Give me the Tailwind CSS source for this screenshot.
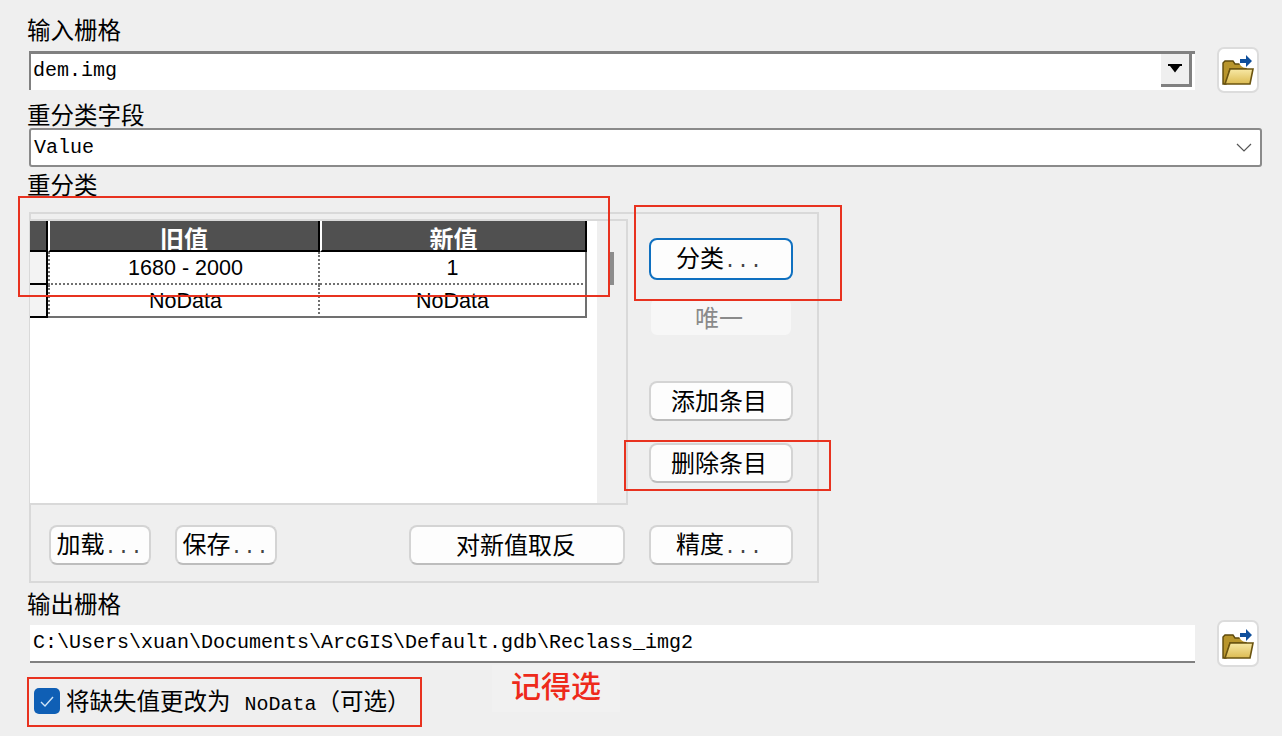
<!DOCTYPE html>
<html lang="zh-CN">
<head>
  <meta charset="UTF-8" />
  <title>重分类</title>
  <script src="https://cdn.jsdelivr.net/npm/@tailwindcss/browser@4"></script>
</head>
<body class="bg-[#efefef] text-black font-['Noto_Sans_CJK_SC','Liberation_Sans',sans-serif] text-[23.5px] leading-[24px]">
<div class="relative w-[1282px] h-[736px] overflow-hidden pl-[29px] pt-[19px]">

  <!-- 输入栅格 -->
  <div class="-ml-[2px] h-[24px] leading-[20px]">输入栅格</div>
  <div class="mt-[4px] flex items-center h-[46px]">
    <div class="w-[1166px] h-[39px] flex items-center justify-between bg-white border-t-[3px] border-l-[2px] border-[#808080] pl-[2px] pr-[3px] font-['Liberation_Mono',monospace] text-[20px]">
      <span class="-mt-[2px]">dem.img</span>
      <div class="w-[31px] h-[33px] -mt-[3px] flex items-center justify-center bg-[#efefef] border-r-[3px] border-b-[3px] border-[#808080]">
        <svg width="14" height="9" viewBox="0 0 14 9"><path d="M0 0h14v2H0z M2 2h10L7 8.5z" fill="#000"/></svg>
      </div>
    </div>
    <button class="ml-[22px] w-[42px] h-[46px] flex items-center justify-center bg-white border-2 border-[#dcdcdc] rounded-[7px]">
      <svg width="32" height="32" viewBox="0 0 32 32">
        <defs>
          <linearGradient id="folderFront" x1="0" y1="0" x2="0" y2="1">
            <stop offset="0" stop-color="#f8e9a6"/>
            <stop offset="1" stop-color="#dcbb52"/>
          </linearGradient>
        </defs>
        <path d="M1 9l2-2h8l2 3h11v5H8L4 30H1z" fill="#b8952c" stroke="#5e4a0c" stroke-width="1.4"/>
        <path d="M8 15h23l-3 15H3z" fill="url(#folderFront)" stroke="#6b5410" stroke-width="1.6"/>
        <circle cx="24" cy="7" r="7" fill="#fff"/>
        <path d="M18 5h6V1l6 6-6 6V9h-6z" fill="#0f4f9c"/>
      </svg>
    </button>
  </div>

  <!-- 重分类字段 -->
  <div class="-ml-[2px] mt-[11px] h-[24px] leading-[20px]">重分类字段</div>
  <div class="w-[1233px] h-[39px] flex items-center justify-between bg-white border-2 border-[#8a8a8a] rounded-[3px] pl-[3px] pr-[8px] font-['Liberation_Mono',monospace] text-[20px]">
    <span>Value</span>
    <svg width="16" height="9" viewBox="0 0 16 9" fill="none" stroke="#555" stroke-width="1.2"><path d="M1 1l7 7 7-7"/></svg>
  </div>

  <!-- 重分类 -->
  <div class="-ml-[2px] mt-[7px] h-[24px] leading-[20px]">重分类</div>
  <div class="mt-[14px] w-[790px] h-[371px] flex border-2 border-[#d9d9d9]">
    <div class="w-[598px] -ml-px">
      <div class="mt-[5px] h-[286px] flex border-y-2 border-r-2 border-[#d9d9d9]">
        <div class="w-[567px] bg-white">
          <div class="w-[557px] grid grid-cols-[18px_272px_267px] text-[21.5px] leading-[33px] font-['Liberation_Sans','Noto_Sans_CJK_SC',sans-serif] text-center">
            <!-- header -->
            <div class="h-[31px] bg-[#505050] border-b-2 border-r-2 border-black"></div>
            <div class="h-[31px] bg-[#505050] border-b-2 border-black border-l-2 border-l-white border-r-2 border-r-black overflow-hidden text-white font-bold text-[24px] leading-[34px] font-['Noto_Sans_CJK_SC',sans-serif]">旧值</div>
            <div class="h-[31px] bg-[#505050] border-b-2 border-black border-l-2 border-l-white border-r-2 border-r-black overflow-hidden text-white font-bold text-[24px] leading-[34px] font-['Noto_Sans_CJK_SC',sans-serif]">新值</div>
            <!-- rows -->
            <div class="h-[33px] bg-[#f3f3f3] border-b-2 border-r-2 border-black"></div>
            <div class="h-[33px] pl-[3px] border-2 border-t-0 border-dotted border-[#707070]">1680 - 2000</div>
            <div class="h-[33px] border-b-2 border-dotted border-[#707070] border-r-2 [border-right-style:solid]">1</div>
            <div class="h-[33px] bg-[#f3f3f3] border-b-2 border-r-2 border-black"></div>
            <div class="h-[33px] pl-[3px] border-2 border-t-0 border-dotted border-[#707070] [border-bottom-style:solid]">NoData</div>
            <div class="h-[33px] border-b-2 border-r-2 border-[#707070]">NoData</div>
          </div>
        </div>
        <div class="pl-[13px] pt-[31px]">
          <div class="w-[4px] h-[33px] bg-[#8c8c8c]"></div>
        </div>
      </div>
      <div class="mt-[20px] pl-[19px] flex text-[24px]">
        <button class="w-[102px] h-[40px] bg-[#fdfdfd] border-2 border-[#d4d4d4] border-b-[#bdbdbd] rounded-[8px]">加载<span class="font-['Liberation_Mono',monospace] text-[20px] tracking-[1px] text-[#444]">...</span></button>
        <button class="ml-[24px] w-[102px] h-[40px] bg-[#fdfdfd] border-2 border-[#d4d4d4] border-b-[#bdbdbd] rounded-[8px]">保存<span class="font-['Liberation_Mono',monospace] text-[20px] tracking-[1px] text-[#444]">...</span></button>
        <button class="ml-[132px] w-[216px] h-[40px] pr-[2px] pb-[3px] bg-[#fdfdfd] border-2 border-[#d4d4d4] border-b-[#bdbdbd] rounded-[8px]">对新值取反</button>
      </div>
    </div>
    <div class="ml-[21px] w-[144px] flex flex-col text-[24px]">
      <button class="mt-[24px] h-[42px] pr-[3px] bg-[#fdfdfd] border-2 border-[#0f70c0] rounded-[8px]">分类<span class="font-['Liberation_Mono',monospace] text-[20px] tracking-[1px] text-[#444]">...</span></button>
      <button class="mt-[17px] h-[40px] pr-[4px] bg-[#f7f7f7] border-2 border-[#efefef] rounded-[8px] text-[#8a8a8a]">唯一</button>
      <button class="mt-[44px] h-[40px] pr-[4px] pb-[3px] bg-[#fdfdfd] border-2 border-[#d4d4d4] border-b-[#bdbdbd] rounded-[8px]">添加条目</button>
      <button class="mt-[22px] h-[40px] pr-[4px] pb-[3px] bg-[#fdfdfd] border-2 border-[#d4d4d4] border-b-[#bdbdbd] rounded-[8px]">删除条目</button>
      <button class="mt-[42px] h-[40px] pr-[3px] bg-[#fdfdfd] border-2 border-[#d4d4d4] border-b-[#bdbdbd] rounded-[8px]">精度<span class="font-['Liberation_Mono',monospace] text-[20px] tracking-[1px] text-[#444]">...</span></button>
    </div>
  </div>

  <!-- 输出栅格 -->
  <div class="-ml-[2px] mt-[10px] h-[24px] leading-[20px]">输出栅格</div>
  <div class="mt-[3px] flex items-center h-[47px]">
    <div class="ml-px w-[1165px] h-[38px] flex items-center bg-white border-b-2 border-[#808080] pl-[3px] pt-[1px] font-['Liberation_Mono',monospace] text-[20px]">C:\Users\xuan\Documents\ArcGIS\Default.gdb\Reclass_img2</div>
    <button class="ml-[22px] w-[42px] h-[47px] flex items-center justify-center bg-white border-2 border-[#dcdcdc] rounded-[7px]">
      <svg width="32" height="32" viewBox="0 0 32 32">
        <path d="M1 9l2-2h8l2 3h11v5H8L4 30H1z" fill="#b8952c" stroke="#5e4a0c" stroke-width="1.4"/>
        <path d="M8 15h23l-3 15H3z" fill="url(#folderFront)" stroke="#6b5410" stroke-width="1.6"/>
        <circle cx="24" cy="7" r="7" fill="#fff"/>
        <path d="M18 5h6V1l6 6-6 6V9h-6z" fill="#0f4f9c"/>
      </svg>
    </button>
  </div>

  <!-- 复选框 -->
  <div class="mt-[21px] ml-[5px] flex items-center h-[26px]">
    <div class="w-[26px] h-[26px] rounded-[5px] bg-[#0f5fb5] flex items-center justify-center">
      <svg width="14" height="11" viewBox="0 0 14 11" fill="none" stroke="#cfe4f7" stroke-width="1.4"><path d="M1 6l4 4 8-9"/></svg>
    </div>
    <span class="ml-[6px] pt-[2px]">将缺失值更改为<span class="ml-[14px] font-['Liberation_Mono',monospace] text-[20px]">NoData</span>（可选）</span>
  </div>

  <!-- 红色标注 -->
  <div class="absolute left-[18px] top-[196px] w-[592px] h-[101px] border-2 border-[#e8321f]"></div>
  <div class="absolute left-[634px] top-[205px] w-[208px] h-[96px] border-2 border-[#e8321f]"></div>
  <div class="absolute left-[624px] top-[440px] w-[207px] h-[51px] border-2 border-[#e8321f]"></div>
  <div class="absolute left-[27px] top-[677px] w-[395px] h-[50px] border-2 border-[#e8321f]"></div>
  <div class="absolute left-[492px] top-[665px] w-[128px] h-[47px] pb-[10px] flex items-center justify-center bg-[#f1f1f1] text-[#ee2a1b] text-[30px] font-medium">记得选</div>
</div>
</body>
</html>
